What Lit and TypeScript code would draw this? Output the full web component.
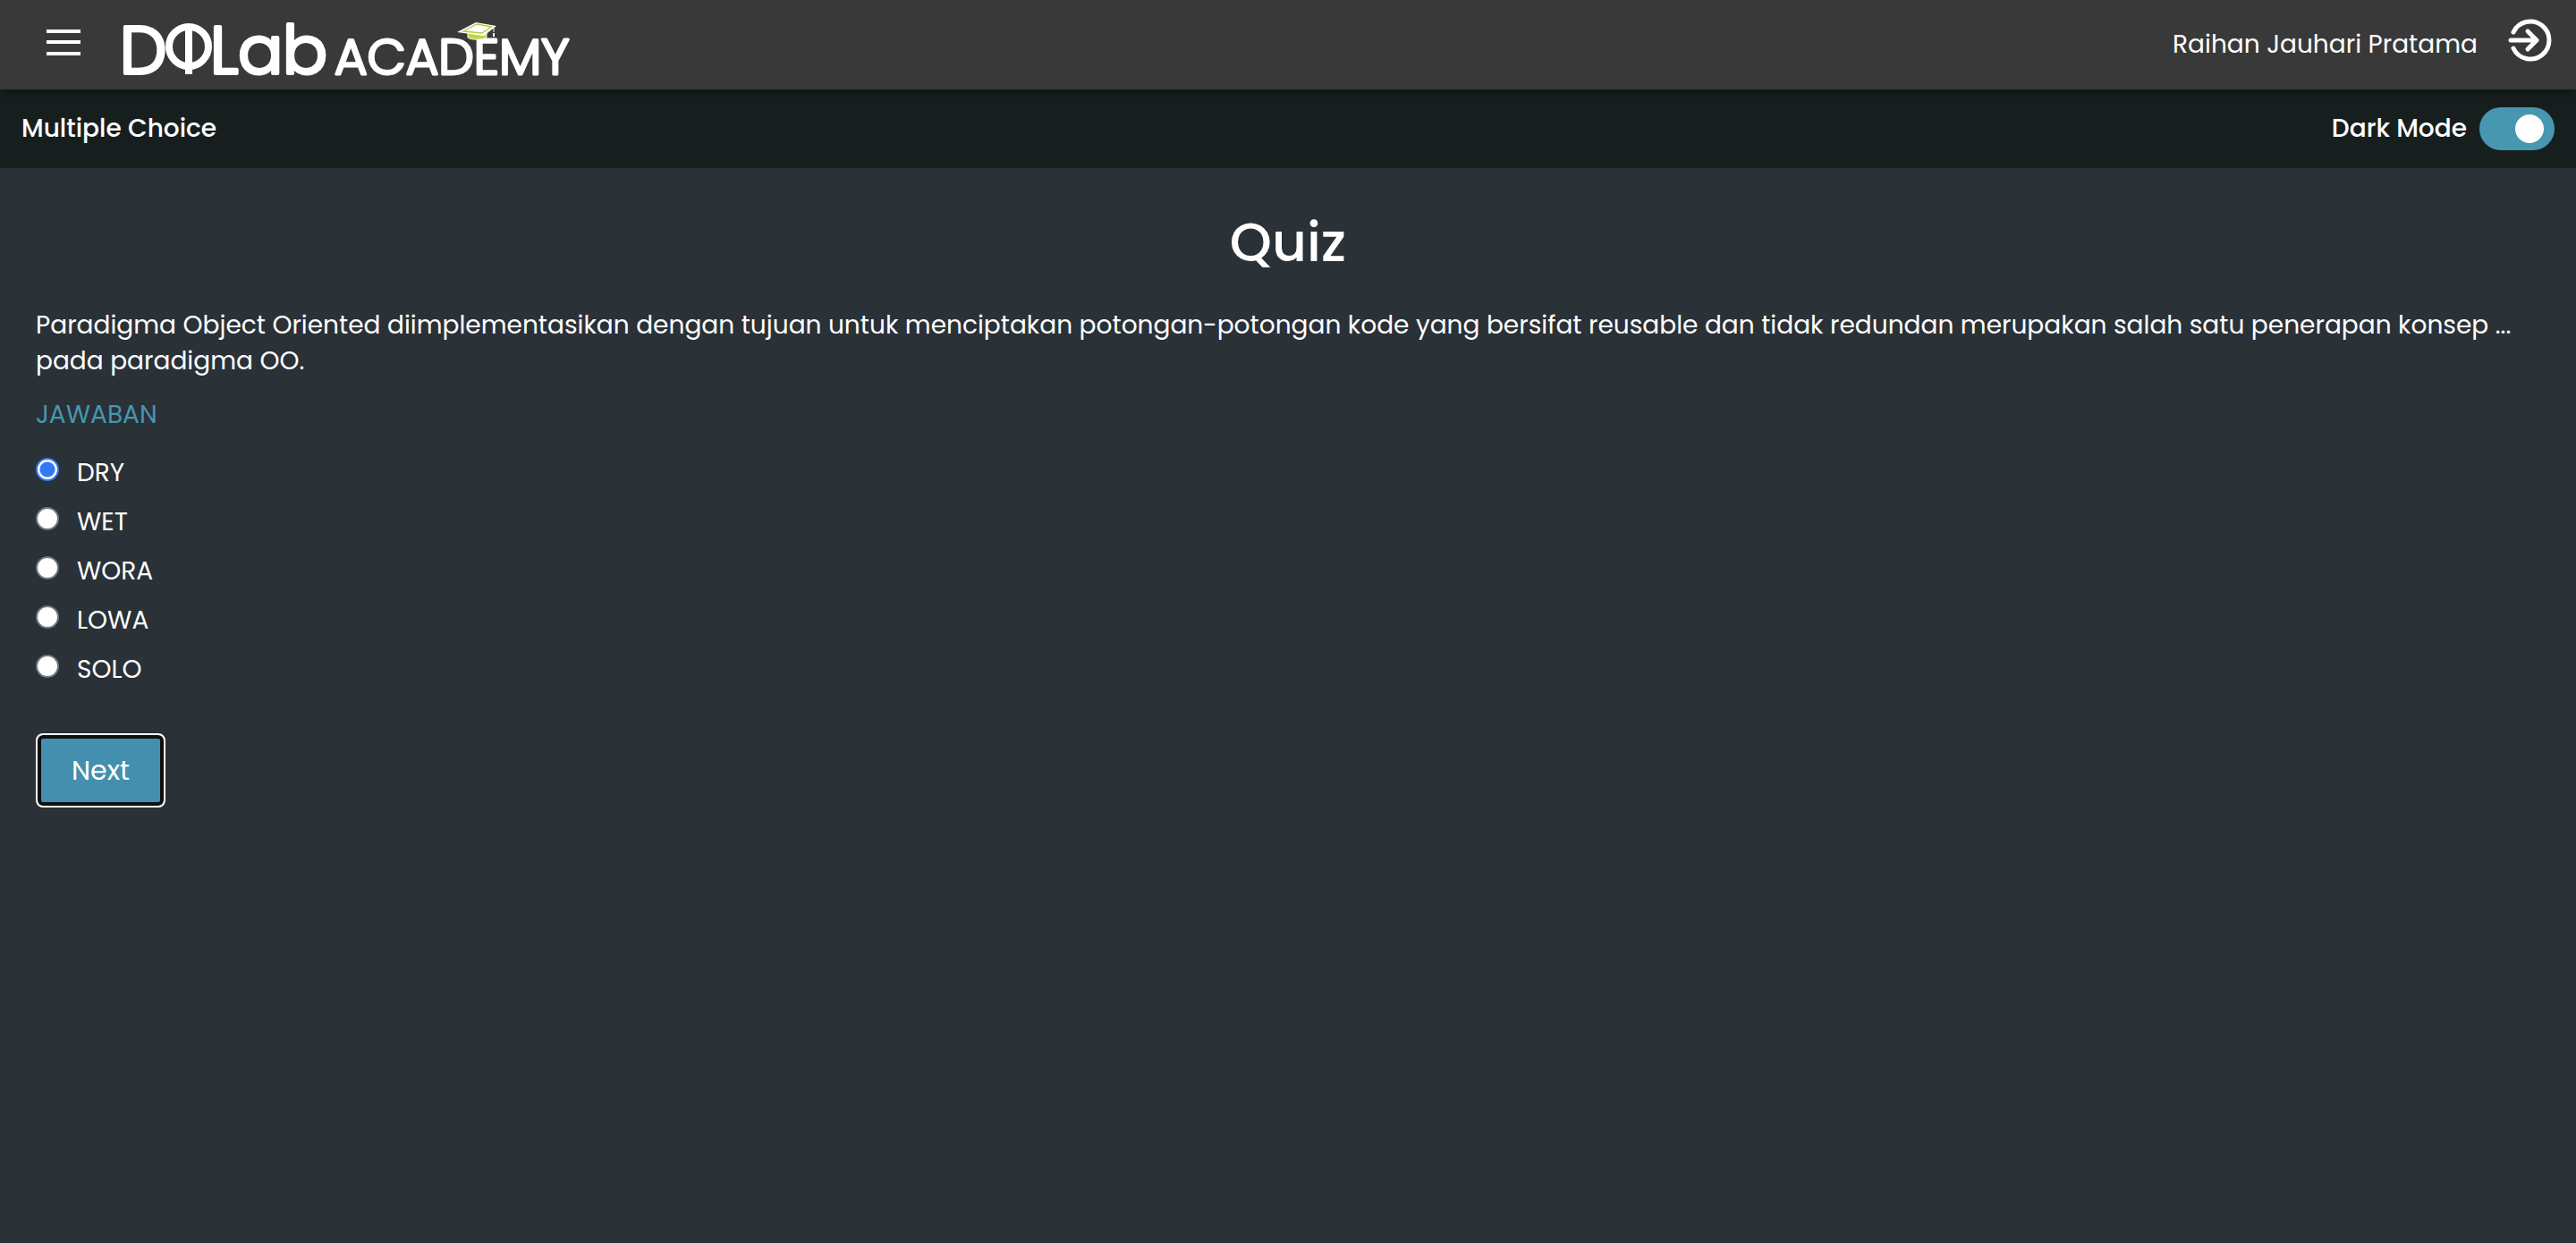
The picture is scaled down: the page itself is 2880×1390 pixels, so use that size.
import { LitElement, html, css } from "lit";
import { customElement, state } from "lit/decorators.js";

@customElement("academy-logo")
class AcademyLogo extends LitElement {
  static styles = css`
    :host {
      display: block;
    }
    .logo {
      display: block;
      width: 504px;
      height: 66px;
      overflow: visible;
    }
    .word {
      font-family: Poppins, Inter, sans-serif;
      font-weight: 300;
      fill: #fff;
      stroke: #fff;
      stroke-linejoin: round;
      stroke-linecap: round;
    }
    .brand {
      font-size: 74px;
      stroke-width: 4px;
    }
    .name {
      font-size: 56px;
      stroke-width: 3px;
    }
  `;

  render() {
    return html`
      <svg class="logo" viewBox="136 20 504 66" role="img" aria-label="DQLab Academy">
        <text class="word brand" x="134" y="82">D</text>
        <circle cx="211" cy="52" r="22" fill="none" stroke="#fff" stroke-width="8" />
        <rect x="207" y="28" width="8" height="55" fill="#fff" />
        <text class="word brand" x="235" y="82">Lab</text>
        <text class="word name" x="374" y="83">ACADEMY</text>
        <path d="M523 36v6c4 3 17 3 21 0v-6z" fill="#c3d545" stroke="#fff" stroke-width="1" />
        <path d="M511 36L532 25L555 29L541 40Z" fill="#fff" />
        <path d="M518 35L533 27L549 30L539 37Z" fill="#fff" stroke="#b9cc3c" stroke-width="1.4" />
        <path d="M552 30v6" stroke="#fff" stroke-width="1" />
        <path d="M552 37v4" stroke="#fff" stroke-width="2" />
      </svg>
    `;
  }
}

@customElement("app-root")
class AppRoot extends LitElement {
  @state() private answer = "DRY";
  @state() private dark = true;

  private options = ["DRY", "WET", "WORA", "LOWA", "SOLO"];

  static styles = css`
    :host {
      display: flex;
      flex-direction: column;
      min-height: 100vh;
      background: #2a3137;
      color: #fff;
      font-family: Poppins, Inter, "Noto Sans", sans-serif;
      font-size: 28px;
      line-height: 40px;
    }
    * {
      box-sizing: border-box;
    }
    .top {
      display: flex;
      align-items: center;
      height: 100px;
      padding: 0 24px 0 48px;
      background: #393939;
      box-shadow: 0 4px 12px rgba(0, 0, 0, 0.4);
      position: relative;
      z-index: 1;
    }
    .menu,
    .exit {
      display: block;
      padding: 0;
      border: 0;
      background: none;
      color: inherit;
      cursor: pointer;
    }
    .menu svg,
    .exit svg {
      display: block;
    }
    .menu {
      margin: 0 42px 4px 0;
    }
    academy-logo {
      margin-top: 6px;
    }
    .exit {
      margin: 0 2px 10px 32px;
    }
    .user {
      margin-left: auto;
    }
    .bar {
      display: flex;
      align-items: center;
      justify-content: space-between;
      height: 88px;
      padding: 0 24px;
      background: #171f1e;
      font-weight: 500;
    }
    .section {
      margin: 0;
      font-size: 28px;
      font-weight: 500;
    }
    .mode {
      display: flex;
      align-items: center;
      gap: 14px;
      cursor: pointer;
    }
    .switch {
      appearance: none;
      display: flex;
      align-items: center;
      width: 84px;
      height: 48px;
      margin: 0;
      padding: 0 12px;
      border-radius: 24px;
      background: #777;
      cursor: pointer;
    }
    .switch::before {
      content: "";
      width: 32px;
      height: 32px;
      border-radius: 50%;
      background: #fff;
    }
    .switch:checked {
      justify-content: flex-end;
      background: #4797b1;
    }
    .quiz {
      padding: 48px 40px;
    }
    .title {
      margin: 0 0 38px;
      font-size: 60px;
      font-weight: 500;
      line-height: 70px;
      text-align: center;
    }
    .question {
      margin: 0 0 20px;
    }
    .answers {
      margin: 0;
      padding: 0;
      border: 0;
    }
    .legend {
      margin: 0 0 25px;
      padding: 0;
      color: #4797b1;
    }
    .option {
      display: flex;
      align-items: center;
      gap: 20px;
      width: max-content;
      height: 40px;
      margin-bottom: 15px;
      cursor: pointer;
    }
    .radio {
      appearance: none;
      width: 26px;
      height: 26px;
      margin: 0 0 8px;
      border: 2px solid #767676;
      border-radius: 50%;
      background: #fff;
    }
    .radio:checked {
      border-color: #3478f6;
      background: radial-gradient(circle, #3478f6 8px, #fff 9px);
    }
    .next {
      display: block;
      margin-top: 36px;
      padding: 18px 38px;
      border: 2px solid #fff;
      border-radius: 8px;
      background: #458fae;
      box-shadow: inset 0 0 0 4px #101010;
      color: #fff;
      font: inherit;
      font-size: 30px;
      line-height: 43px;
      cursor: pointer;
    }
  `;

  render() {
    return html`
      <header class="top">
        <button class="menu" type="button" aria-label="Menu">
          <svg width="46" height="46" viewBox="0 0 46 46">
            <path d="M4 10h38M4 22h38M4 35h38" stroke="#fff" stroke-width="4" />
          </svg>
        </button>
        <academy-logo></academy-logo>
        <span class="user">Raihan Jauhari Pratama</span>
        <button class="exit" type="button" aria-label="Log out">
          <svg width="52" height="52" viewBox="0 0 52 52" fill="none" stroke="#fff"
            stroke-width="5" stroke-linecap="round" stroke-linejoin="round">
            <path d="M8 17A21 21 0 1 1 8 35" />
            <path d="M5 26H34M24 16L34 26L24 36" />
          </svg>
        </button>
      </header>
      <div class="bar">
        <h2 class="section">Multiple Choice</h2>
        <label class="mode">
          Dark Mode
          <input class="switch" type="checkbox" role="switch" .checked=${this.dark}
            @change=${(e: Event) => (this.dark = (e.target as HTMLInputElement).checked)} />
        </label>
      </div>
      <main class="quiz">
        <h1 class="title">Quiz</h1>
        <p class="question">
          Paradigma Object Oriented diimplementasikan dengan tujuan untuk menciptakan
          potongan-potongan kode yang bersifat reusable dan tidak redundan merupakan salah satu
          penerapan konsep ... pada paradigma OO.
        </p>
        <fieldset class="answers">
          <legend class="legend">JAWABAN</legend>
          ${this.options.map(
            (option) => html`
              <label class="option">
                <input class="radio" type="radio" name="answer" .value=${option}
                  .checked=${this.answer === option}
                  @change=${() => (this.answer = option)} />
                ${option}
              </label>
            `
          )}
        </fieldset>
        <button class="next" type="button">Next</button>
      </main>
    `;
  }
}
